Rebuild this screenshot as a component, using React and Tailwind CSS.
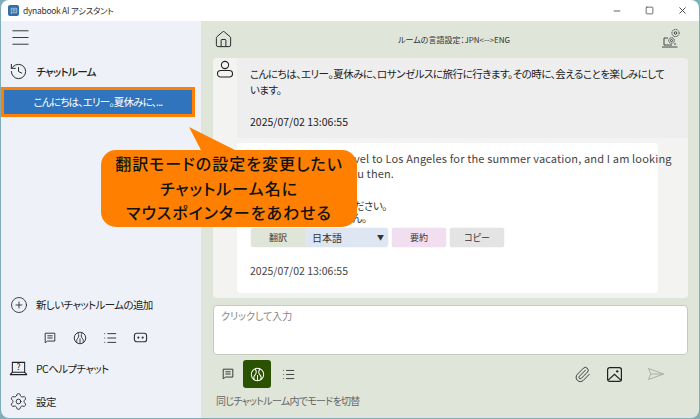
import React from "react";
import { Home, Menu, History, CirclePlus, Settings, Paperclip, Minus, Square, X } from "lucide-react";

const jp = "font-['Noto_Sans_CJK_JP','Noto_Sans',sans-serif] [font-feature-settings:'palt']";

function ChatIcon({ className }) {
  return (
    <svg viewBox="0 0 16 16" className={className} fill="none" stroke="currentColor" strokeWidth="1.1">
      <path d="M2.5 2.5h11v9H5l-2.5 2z" strokeLinejoin="round" />
      <path d="M5 5.5h6M5 8h6" />
    </svg>
  );
}

function BotIcon({ className }) {
  return (
    <svg viewBox="0 0 16 16" className={className} fill="none" stroke="currentColor" strokeWidth="1.2">
      <rect x="1.5" y="3.5" width="13" height="9" rx="2.5" />
      <circle cx="5.7" cy="8" r="1.2" fill="currentColor" stroke="none" />
      <circle cx="10.3" cy="8" r="1.2" fill="currentColor" stroke="none" />
    </svg>
  );
}

function BallIcon({ className }) {
  return (
    <svg viewBox="0 0 16 16" className={className} fill="none" stroke="currentColor" strokeWidth="1.1">
      <circle cx="8" cy="8" r="6.6" />
      <path d="M5.4 2C7.2 4.5 6.8 7 5.2 8.6 4.2 9.6 3.8 11.5 4.6 13.6" />
      <path d="M10.6 2C8.8 4.5 9.2 7 10.8 8.6 11.8 9.6 12.2 11.5 11.4 13.6" />
      <path d="M8 8.5v6" />
    </svg>
  );
}

function ListIcon({ className }) {
  return (
    <svg viewBox="0 0 16 16" className={className} fill="none" stroke="currentColor" strokeWidth="1.1">
      <path d="M1.5 3h1M5 3h10M1.5 8h1M5 8h10M1.5 13h1M5 13h10" />
    </svg>
  );
}

function HelpLaptop() {
  return (
    <svg viewBox="0 0 20 18" className="w-[19px] h-[17px] text-[#222]" fill="none" stroke="currentColor" strokeWidth="1.1">
      <path d="M3.5 13V2.5h13V13M1 15.5h18" />
      <path d="M1 15.5l2.5-2.5h13l2.5 2.5" />
      <text x="10" y="10.5" fontSize="9" textAnchor="middle" fill="currentColor" stroke="none">?</text>
    </svg>
  );
}

function SettingsLaptop() {
  return (
    <svg viewBox="0 0 20 22" className="w-[20px] h-[22px] text-[#333]" fill="none" stroke="currentColor" strokeWidth="0.9">
      <path d="M3 11v7h8M3 11h4M1 20h15.5" />
      <path d="M14 16v2" />
      <circle cx="10.5" cy="13.5" r="2.8" strokeDasharray="1.4 0.5" />
      <circle cx="10.5" cy="13.5" r="1" />
      <circle cx="14.5" cy="6" r="3.6" strokeDasharray="1.5 0.6" />
      <circle cx="14.5" cy="6" r="1.3" />
    </svg>
  );
}

function PictureIcon() {
  return (
    <svg viewBox="0 0 16 16" className="w-[17px] h-[17px] text-[#222]" fill="none" stroke="currentColor" strokeWidth="1.15">
      <rect x="1.5" y="1.5" width="13" height="13" rx="2" />
      <path d="M1.8 13.5L8 7.8l6.2 5.7" />
      <circle cx="10.6" cy="5" r="1.1" fill="currentColor" stroke="none" />
    </svg>
  );
}

function SendIcon() {
  return (
    <svg viewBox="0 0 18 14" className="w-[18px] h-[14px] text-[#a9afa4]" fill="none" stroke="currentColor" strokeWidth="1">
      <path d="M1.5 1.5L16.5 7 1.5 12.5 3.8 7z" strokeLinejoin="round" />
      <path d="M3.8 7h12.7" />
    </svg>
  );
}

function SideRow({ icon, children, className = "" }) {
  return (
    <div className={`flex items-center ${className}`}>
      <div className="w-[35px] shrink-0 flex justify-center">{icon}</div>
      <span className="text-[10.5px] tracking-[-0.6px] text-[#222]">{children}</span>
    </div>
  );
}

export default function App() {
  return (
    <div className={`${jp} relative w-[700px] h-[419px] overflow-hidden bg-[#7fadb8] p-[1px] pt-0`}>
      <div className="flex flex-col h-full rounded-lg overflow-hidden">
        {/* Title bar */}
        <div className="flex items-center h-[21px] bg-white shrink-0">
          <div className="ml-[7px] w-[11px] h-[11px] rounded-[2px] bg-[#2f6ea8] flex items-center justify-center">
            <ChatIcon className="w-[8px] h-[8px] text-white" />
          </div>
          <span className="ml-[4px] text-[8.5px] tracking-[-0.3px] text-[#333]">dynabook AI アシスタント</span>
          <div className="ml-auto flex items-center gap-[23px] pr-[11px] text-[#444]">
            <Minus className="w-[10px] h-[10px]" />
            <Square className="w-[9px] h-[9px]" />
            <X className="w-[11px] h-[11px]" />
          </div>
        </div>

        <div className="flex flex-1 min-h-0">
          {/* Sidebar */}
          <aside className="w-[200px] shrink-0 bg-[#eef2f8] flex flex-col">
            <Menu className="ml-[8px] mt-[5px] w-[23px] h-[23px] text-[#333]" strokeWidth={1} />
            <SideRow className="mt-[13px]" icon={<History className="w-[19px] h-[19px] text-[#222]" strokeWidth={1.2} />}>
              <span className="font-medium">チャットルーム</span>
            </SideRow>
            <div className="mt-[6px] w-[194px] h-[30px] bg-[#2f74bd] border-[3px] border-[#ff7f00] flex items-center justify-center text-white text-[10.5px] tracking-[-0.8px]">
              こんにちは、エリー。夏休みに、...
            </div>
            <div className="mt-auto">
              <SideRow icon={<CirclePlus className="w-[18px] h-[18px] text-[#222]" strokeWidth={1.1} />}>
                新しいチャットルームの追加
              </SideRow>
              <div className="flex items-center gap-[16px] pl-[42px] mt-[16px] text-[#333]">
                <ChatIcon className="w-[14px] h-[14px]" />
                <BallIcon className="w-[14px] h-[14px]" />
                <ListIcon className="w-[14px] h-[14px]" />
                <BotIcon className="w-[15px] h-[15px]" />
              </div>
              <SideRow className="mt-[15px]" icon={<HelpLaptop />}>
                PCヘルプチャット
              </SideRow>
              <SideRow className="mt-[15px] mb-[7px]" icon={<Settings className="w-[19px] h-[19px] text-[#222]" strokeWidth={1.1} />}>
                設定
              </SideRow>
            </div>
          </aside>

          {/* Main */}
          <main className="flex-1 min-w-0 bg-[#dfe5d8] flex flex-col pl-[12px] pr-[11px]">
            <div className="flex items-center justify-between h-[37px] shrink-0">
              <Home className="w-[19px] h-[19px] text-[#222] ml-[1px]" strokeWidth={1.2} />
              <span className="text-[8px] text-[#333] ml-[14px]">ルームの言語設定：JPN&lt;--&gt;ENG</span>
              <div className="mr-[7px] mb-[3px]"><SettingsLaptop /></div>
            </div>

            {/* Messages */}
            <div className="h-[240px] shrink-0 bg-[#f3f3f2] rounded-[4px] overflow-hidden flex flex-col">
              <div className="h-[80px] flex shrink-0">
                <div className="w-[24px] shrink-0 pt-[1px] flex justify-center">
                  <svg viewBox="0 0 20 20" className="w-[20px] h-[20px] text-[#222]" fill="none" stroke="currentColor" strokeWidth="1.1">
                    <circle cx="10" cy="6" r="3.6" />
                    <rect x="2.5" y="11.5" width="15" height="6.5" rx="3.2" />
                  </svg>
                </div>
                <div className="flex-1 min-w-0 bg-[#eeeeee] pl-[13px] pt-[8px] text-[10.5px] tracking-[-0.5px] leading-[16px] text-[#222]">
                  <p className="whitespace-nowrap">こんにちは、エリー。夏休みに、ロサンゼルスに旅行に行きます。その時に、会えることを楽しみにして</p>
                  <p>います。</p>
                  <p className="mt-[16px] tracking-normal">2025/07/02 13:06:55</p>
                </div>
              </div>
              <div className="ml-[24px] mt-[5px] w-[421px] h-[150px] bg-white rounded-[4px] pl-[13px] pt-[8px] text-[11px] leading-[15px] text-[#444]">
                <p className="whitespace-nowrap tracking-[0.15px]">Hello, Ellie. I will travel to Los Angeles for the summer vacation, and I am looking</p>
                <p className="tracking-[0.15px]">forward to seeing you then.</p>
                <p className="mt-[19px] text-[10.5px] tracking-[-0.5px] leading-[11px] text-[#333]">翻訳内容を必ずご確認ください。</p>
                <p className="mt-[1px] text-[10.5px] tracking-[-0.5px] leading-[12px] text-[#333]">誤りがあるかもしれません。</p>
                <div className="flex items-center gap-[4px] mt-[4px] text-[9px] text-[#333] pl-[1px]">
                  <div className="flex h-[19px] rounded-[3px] overflow-hidden shadow-[0_0_1px_#bbb]">
                    <span className="w-[54px] bg-[#dfe5d8] flex items-center justify-center">翻訳</span>
                    <span className="w-[83px] bg-[#dde6f1] flex items-center justify-between pl-[7px] pr-[4px] text-[10px]">
                      日本語
                      <span className="text-[7px]">▼</span>
                    </span>
                  </div>
                  <span className="w-[54px] h-[19px] rounded-[3px] bg-[#f2def1] shadow-[0_0_1px_#bbb] flex items-center justify-center">要約</span>
                  <span className="w-[54px] h-[19px] rounded-[3px] bg-[#e4e4e4] shadow-[0_0_1px_#bbb] flex items-center justify-center">コピー</span>
                </div>
                <p className="mt-[16px] text-[10.5px] text-[#444]">2025/07/02 13:06:55</p>
              </div>
            </div>

            {/* Input */}
            <div className="mt-[7px] h-[50px] shrink-0 bg-white rounded-[4px] border border-[#c5cbbf] px-[7px] pt-[2px] text-[10px] text-[#888]">
              クリックして入力
            </div>
            <div className="flex items-center mt-[5px] h-[28px] shrink-0">
              <div className="w-[30px] flex justify-center"><ChatIcon className="w-[14px] h-[14px] text-[#333]" /></div>
              <div className="w-[28px] h-[28px] rounded-[3px] bg-[#2b5200] flex items-center justify-center">
                <BallIcon className="w-[15px] h-[15px] text-white" />
              </div>
              <div className="w-[34px] flex justify-center"><ListIcon className="w-[13px] h-[13px] text-[#333]" /></div>
              <div className="ml-auto flex items-center pr-[23px]">
                <Paperclip className="w-[17px] h-[17px] text-[#222]" strokeWidth={1.2} />
                <div className="ml-[15px]"><PictureIcon /></div>
                <div className="ml-[24px]"><SendIcon /></div>
              </div>
            </div>
            <p className="mt-[5px] ml-[3px] text-[10px] tracking-[-0.7px] text-[#666]">同じチャットルーム内でモードを切替</p>
          </main>
        </div>
      </div>

      {/* Callout over the page */}
      <svg viewBox="0 0 60 30" className="absolute left-[187px] top-[126px] w-[60px] h-[30px]">
        <polygon points="2,1 56,28 16,28" fill="#ff8000" />
      </svg>
      <div className="absolute left-[101px] top-[150px] w-[256px] h-[77px] rounded-[15px] bg-[#ff8000] flex flex-col items-center justify-center text-[16px] leading-[24.5px] font-medium text-[#111] tracking-[1px] pb-[1px]">
        <span>翻訳モードの設定を変更したい</span>
        <span>チャットルーム名に</span>
        <span>マウスポインターをあわせる</span>
      </div>
    </div>
  );
}
